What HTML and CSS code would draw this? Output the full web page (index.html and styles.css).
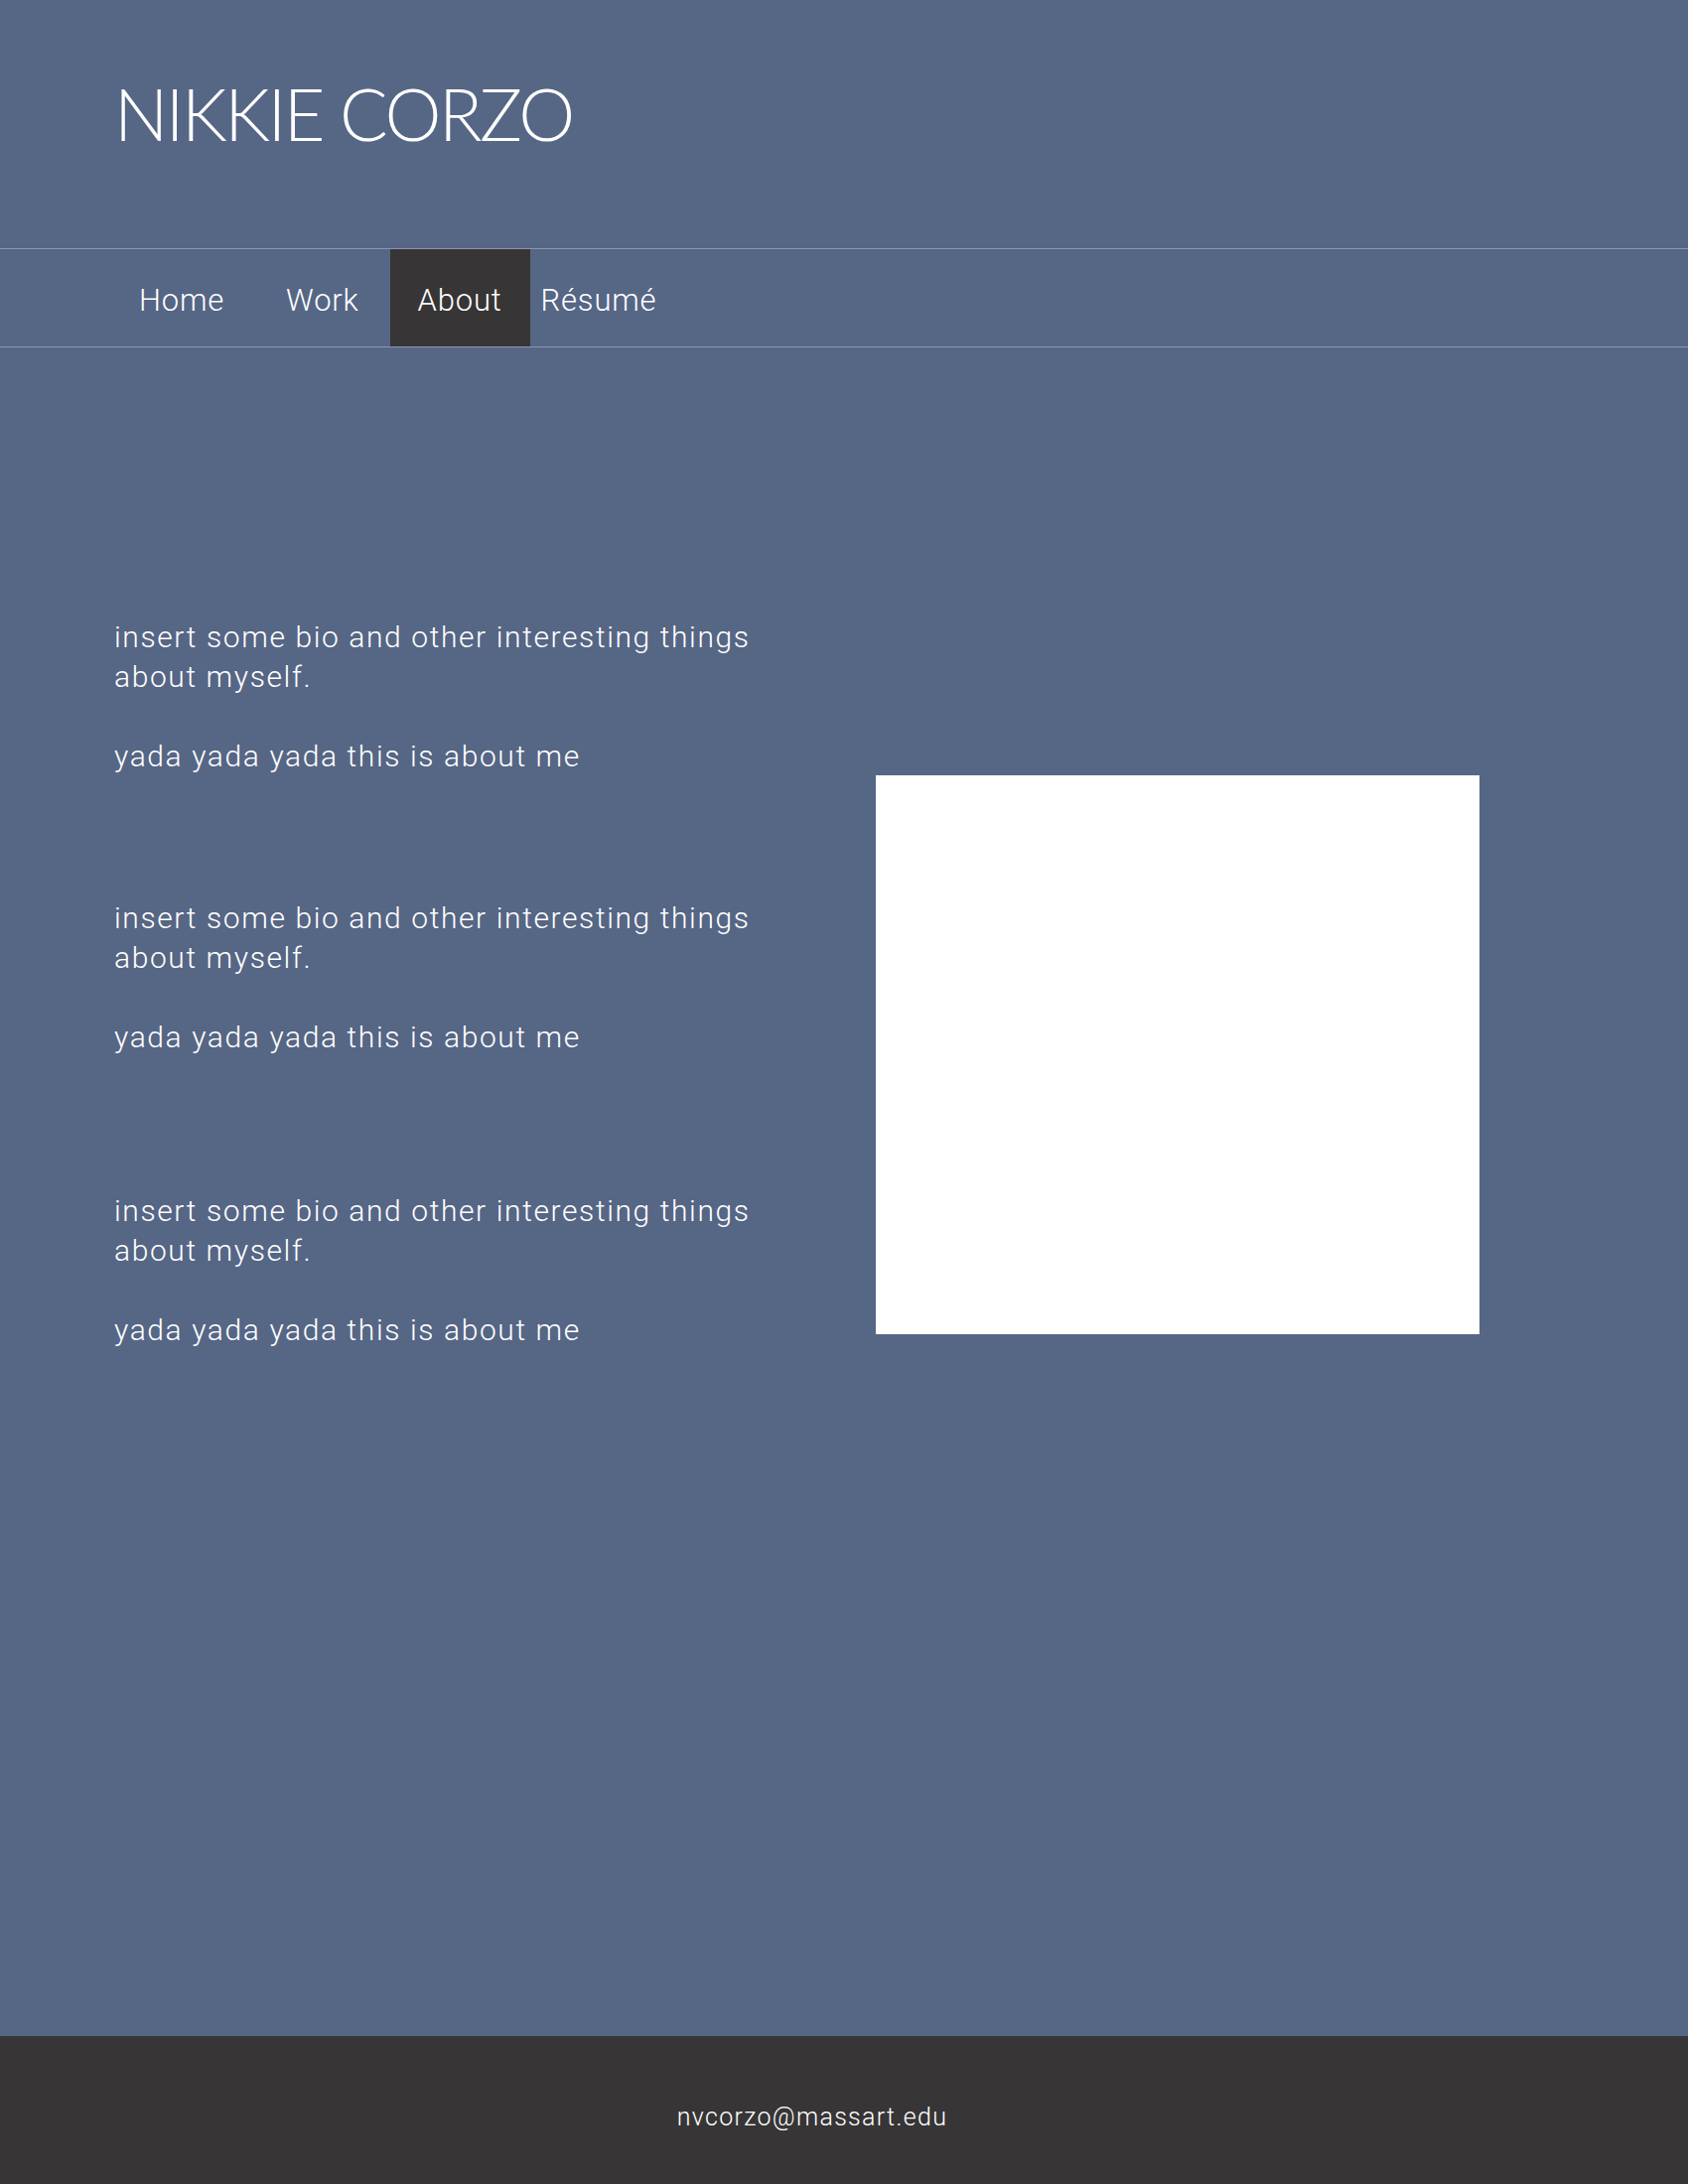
FILE: index.html
```html
<!DOCTYPE html>
<html lang="en">
<head>
<meta charset="utf-8">
<title>Nikkie Corzo — About</title>
<link rel="stylesheet" href="styles.css">
</head>
<body>
<div class="page">
  <header class="site-header">
    <h1 class="site-title">NIKKIE CORZO</h1>
  </header>
  <nav class="site-nav">
    <ul class="nav-list">
      <li class="nav-item nav-home"><a href="#">Home</a></li>
      <li class="nav-item nav-work"><a href="#">Work</a></li>
      <li class="nav-item nav-about is-active"><a href="#">About</a></li>
      <li class="nav-item nav-resume"><a href="#">Résumé</a></li>
    </ul>
  </nav>
  <main class="about">
    <div class="bio-col">
      <div class="bio-block">
        <p>insert some bio and other interesting things about myself.</p>
        <p>yada yada yada this is about me</p>
      </div>
      <div class="bio-block">
        <p>insert some bio and other interesting things about myself.</p>
        <p>yada yada yada this is about me</p>
      </div>
      <div class="bio-block">
        <p>insert some bio and other interesting things about myself.</p>
        <p>yada yada yada this is about me</p>
      </div>
    </div>
    <div class="photo-col">
      <div class="photo"></div>
    </div>
  </main>
  <footer class="site-footer">
    <p class="footer-email">nvcorzo@massart.edu</p>
  </footer>
</div>
</body>
</html>
```

FILE: styles.css
```css
* { box-sizing: border-box; }
html, body { margin: 0; padding: 0; }
body {
  background: #566685;
  color: #ffffff;
  font-family: Roboto, "Liberation Sans", sans-serif;
}
.page {
  display: flex;
  flex-direction: column;
  min-height: 2200px;
}
.site-header {
  height: 250px;
  padding: 74px 0 0 115px;
}
.site-title {
  margin: 0;
  font-family: Lato, "Noto Sans", sans-serif;
  font-weight: 300;
  font-size: 72px;
  line-height: 80px;
  letter-spacing: -2.5px;
  color: #ffffff;
}
.site-nav {
  border-top: 1px solid #8c95b1;
  border-bottom: 1px solid #8c95b1;
  height: 100px;
}
.nav-list {
  list-style: none;
  margin: 0;
  padding: 0 0 0 112px;
  display: flex;
  height: 98px;
}
.nav-item {
  display: flex;
}
.nav-item a {
  display: flex;
  align-items: center;
  padding: 5px 28px 0;
  color: #ffffff;
  text-decoration: none;
  font-size: 31px;
  font-weight: 300;
  letter-spacing: 0.8px;
}
.nav-home a { padding-right: 31px; }
.nav-work a { padding-left: 31px; padding-right: 31px; }
.nav-about a { background: #373536; }
.nav-resume a { padding-left: 11px; }
.about {
  flex: 1;
  display: grid;
  grid-template-columns: 700px 608px;
  column-gap: 67px;
  padding-left: 115px;
}
.bio-col {
  padding-top: 272px;
  display: flex;
  flex-direction: column;
}
.bio-block + .bio-block { margin-top: 123px; }
.bio-block:nth-child(3) { margin-top: 135px; }
.bio-block p {
  margin: 0 0 40px;
  font-size: 30px;
  font-weight: 300;
  line-height: 40px;
  letter-spacing: 1.6px;
}
.bio-block p:last-child { margin-bottom: 0; }
.photo-col {
  padding-top: 431px;
}
.photo {
  width: 608px;
  height: 563px;
  background: #ffffff;
}
.site-footer {
  height: 149px;
  background: #373536;
  display: flex;
  align-items: center;
  justify-content: center;
  padding: 14px 64px 0 0;
}
.footer-email {
  margin: 0;
  font-size: 25px;
  font-weight: 300;
  letter-spacing: 1.3px;
}
```
